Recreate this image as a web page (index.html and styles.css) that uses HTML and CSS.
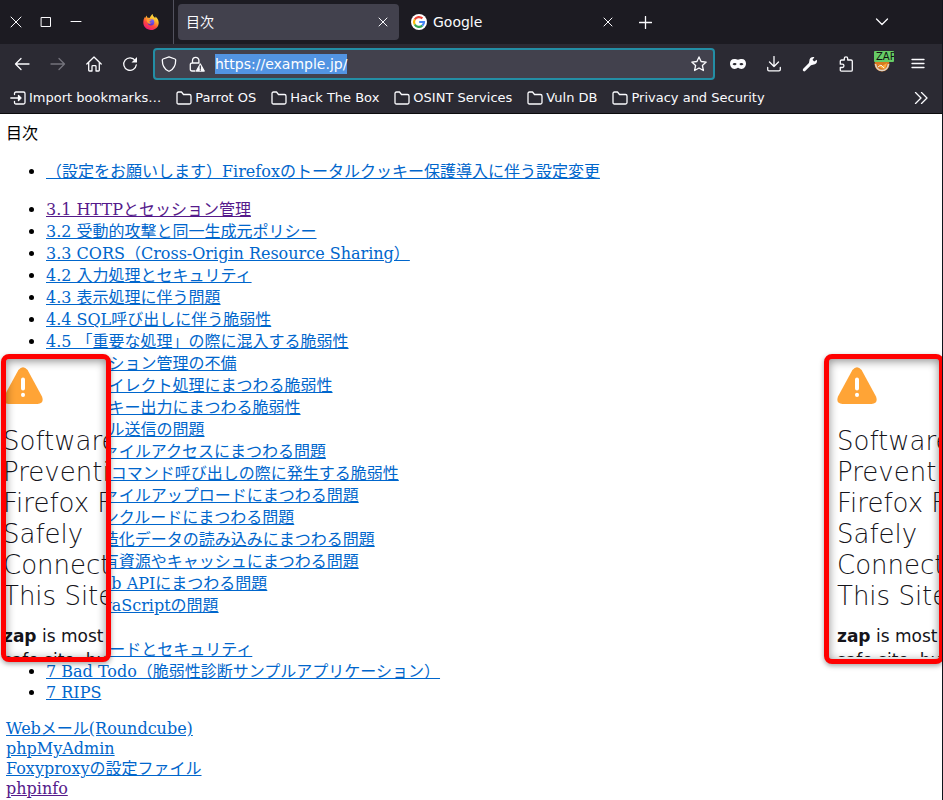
FILE: index.html
```html
<!DOCTYPE html>
<html lang="ja">
<head>
<meta charset="utf-8">
<meta name="viewport" content="width=device-width, initial-scale=1">
<title>目次</title>
<link rel="stylesheet" href="styles.css">
</head>
<body>
<div class="window">
  <header class="chrome">
    <div class="tabstrip">
      <div class="window-controls">
        <button class="control" type="button" aria-label="Close window"><svg class="icon thin" width="12" height="12" viewBox="0 0 12 12"><path d="M1 1l10 10M11 1L1 11"/></svg></button>
        <button class="control" type="button" aria-label="Maximize"><svg class="icon thin" width="12" height="12" viewBox="0 0 12 12"><path d="M1.500 1.500h9v9h-9z"/></svg></button>
        <button class="control" type="button" aria-label="Minimize"><svg class="icon thin" width="12" height="12" viewBox="0 0 12 12"><path d="M1 5.500h10"/></svg></button>
      </div>
      <button class="firefox-view" type="button" aria-label="Firefox View">
        <svg width="16" height="16" viewBox="0 0 16 16">
          <defs>
            <linearGradient id="flame" x1="0.8" y1="0" x2="0.25" y2="1"><stop offset="0" stop-color="#fff44f"/><stop offset="0.35" stop-color="#ffb52a"/><stop offset="0.65" stop-color="#ff4a3a"/><stop offset="1" stop-color="#e8137e"/></linearGradient>
            <linearGradient id="globe" x1="0.7" y1="0" x2="0.3" y2="1"><stop offset="0" stop-color="#7a6cff"/><stop offset="1" stop-color="#5b2ac4"/></linearGradient>
          </defs>
          <path fill="url(#flame)" d="M9.800.100c-.2 1.300.3 2.100 1.300 2.900l1.300 1.200c0-.7-.1-1.200-.3-1.600 2 1.200 3.600 3.500 3.600 6.100 0 4.200-3.400 7.300-7.700 7.300S.3 12.800.3 8.600c0-2.400.5-4.200 1.600-5.700l.3 1.200c.3-1 .8-1.800 1.600-2.500 0 .9.200 1.600.8 2.200.7-.1 1.400 0 2 .300C7.300 3 8.200.900 9.800.100z"/>
          <circle cx="8" cy="8.200" r="3.300" fill="url(#globe)"/>
          <path fill="#ff9d2e" d="M3.600 5.300c1.200-.6 2.400-.5 3.400.2h1.800c-.1.700-.7 1-1.500 1.200-.6.200-.9.500-.8 1 .2.900 1.200 1.300 2.400.9-1 1.500-3.300 1.500-4.500-.2-.5-.9-.8-2-.8-3.100z"/>
        </svg>
      </button>
      <div class="tabs">
        <div class="tab tab-active">
          <a class="tab-title" href="#">目次</a>
          <button class="tab-close" type="button" aria-label="Close tab"><svg class="icon thin" width="10" height="10" viewBox="0 0 10 10"><path d="M1 1l8 8M9 1L1 9"/></svg></button>
        </div>
        <div class="tab">
          <svg width="16" height="16" viewBox="0 0 16 16">
            <circle cx="8" cy="8" r="8" fill="#fff"/>
            <g fill="none" stroke-width="2.200">
              <path stroke="#ea4335" d="M3.700 5.500A5 5 0 0 1 11.400 4.400"/>
              <path stroke="#fbbc05" d="M3.700 10.500A5 5 0 0 1 3.700 5.500"/>
              <path stroke="#34a853" d="M3.700 10.500A5 5 0 0 0 11.300 11.700"/>
              <path stroke="#4285f4" d="M8.200 8H13A5 5 0 0 1 11.300 11.700"/>
            </g>
          </svg>
          <a class="tab-title" href="#">Google</a>
          <button class="tab-close" type="button" aria-label="Close tab"><svg class="icon thin" width="10" height="10" viewBox="0 0 10 10"><path d="M1 1l8 8M9 1L1 9"/></svg></button>
        </div>
        <button class="new-tab" type="button" aria-label="New tab"><svg class="icon" width="13" height="13" viewBox="0 0 13 13"><path d="M6.500 .5v12M.5 6.500h12"/></svg></button>
      </div>
      <button class="all-tabs" type="button" aria-label="List all tabs"><svg class="icon" width="14" height="8" viewBox="0 0 14 8"><path d="M1.500 1l5.500 5.500L12.500 1"/></svg></button>
    </div>

    <nav class="navbar">
      <button class="tool" type="button" aria-label="Back"><svg class="icon" width="16" height="16" viewBox="0 0 16 16"><path d="M15 8H1.500M7 2.500L1.500 8 7 13.500"/></svg></button>
      <button class="tool" type="button" aria-label="Forward" disabled><svg class="icon" width="16" height="16" viewBox="0 0 16 16"><path d="M1 8h13.500M9 2.500L14.500 8 9 13.500"/></svg></button>
      <button class="tool" type="button" aria-label="Home"><svg class="icon" width="16" height="16" viewBox="0 0 16 16"><path d="M.8 8L8 1l7.200 7M2.700 6.500v7.700q0 .8.800.8H6v-4.500q0-.8.800-.8h2.400q.8 0 .8.800V15h2.500q.8 0 .8-.8V6.500"/></svg></button>
      <button class="tool" type="button" aria-label="Reload"><svg class="icon" width="16" height="16" viewBox="0 0 16 16"><path d="M13.200 4.500A6.300 6.300 0 1 0 14.300 8.800"/><path class="fill" stroke="none" d="M15 1v5.500H9.500z"/></svg></button>
      <div class="urlbar">
        <button class="url-icon" type="button" aria-label="Tracking protection"><svg class="icon" width="16" height="16" viewBox="0 0 16 16"><path d="M8 .8l6 2.200q.7.300.7 1c0 5-2.200 9.200-6 11q-.7.300-1.400 0c-3.800-1.800-6-6-6-11q0-.7.700-1z"/></svg></button>
        <button class="url-icon" type="button" aria-label="Site information"><svg class="icon" width="16" height="16" viewBox="0 0 16 16"><path d="M3.500 7V4.500a3.200 3.200 0 0 1 6.400 0V7M6 15H3q-1.700 0-1.700-1.700V8.700Q1.300 7 3 7h7"/><path class="solid" d="M11.300 8l3.900 7H7.400z"/><path class="mark" d="M11.300 10v2.500M11.300 14v.2"/></svg></button>
        <input class="url-input" id="url" type="text" value="https://example.jp/" aria-label="Address" spellcheck="false">
        <button class="url-icon" type="button" aria-label="Bookmark this page"><svg class="icon" width="16" height="16" viewBox="0 0 16 16"><path d="M8 .9l2.100 4.600 5.100.6-3.800 3.400 1 5L8 12l-4.400 2.500 1-5L.8 6.100l5.100-.6z"/></svg></button>
      </div>
      <button class="tool" type="button" aria-label="Private mask"><svg width="16" height="12" viewBox="0 0 16 12"><path class="fill-evenodd" d="M4.200 1C5.800 1 7 1.700 8 1.700S10.200 1 11.800 1C14.400 1 16 2.800 16 5.500S14 11 11.600 11C9.700 11 9 9.700 8 9.700S6.300 11 4.400 11C2 11 0 8.200 0 5.500S1.600 1 4.200 1zM2.600 6.200c.8 1.500 3.400 1.400 4-.3-.7-1.500-3.400-1.300-4 .3zm10.800 0c-.6-1.600-3.300-1.800-4-.3.6 1.700 3.200 1.800 4 .3z"/></svg></button>
      <button class="tool" type="button" aria-label="Downloads"><svg class="icon" width="16" height="16" viewBox="0 0 16 16"><path d="M8 .5v10M3.500 6L8 10.500 12.500 6M1.700 11.500v2q0 1.300 1.300 1.300h10q1.300 0 1.300-1.300v-2"/></svg></button>
      <button class="tool" type="button" aria-label="Developer tools"><svg width="16" height="16" viewBox="0 0 16 16"><path class="fill" d="M14.800 3.700l-2.600 1.800-1.700-1.700L12.400 1.200C9.800.500 7.200 2.200 7.300 5.200L6.900 7.100 1 13q-.6 1.300.3 2t1.900.1L9 9.200l2-.5c2.800-.2 4.700-2.400 3.800-5z"/></svg></button>
      <button class="tool" type="button" aria-label="Extensions"><svg class="icon" width="16" height="16" viewBox="0 0 16 16"><path d="M6.300 4V2.600a1.700 1.700 0 0 1 3.400 0V4h3.300q1.300 0 1.300 1.300V14q0 1.200-1.300 1.200H3.500Q2.300 15.200 2.300 14v-2.500h2a1.600 1.600 0 0 0 0-3.300h-2V5.300Q2.300 4 3.500 4z"/></svg></button>
      <button class="tool" type="button" aria-label="Proxy container">
        <svg width="16" height="16" viewBox="0 0 16 16"><circle cx="8" cy="8" r="7.500" fill="#d87920"/><path d="M1.500 8q1 6.500 6.500 6.500t6.500-6.500" fill="none" stroke="#ddd3c9" stroke-width="1.600"/><path d="M4 8l4 2 5-3-2 6-4-1z" fill="#ffac3d"/><path d="M4 11l3-2 3 3" fill="none" stroke="#f5f0e8"/></svg>
        <span class="badge">ZAP</span>
      </button>
      <button class="tool" type="button" aria-label="Menu"><svg class="icon" width="14" height="12" viewBox="0 0 14 12"><path d="M1 1.500h12M1 5.500h12M1 9.500h12"/></svg></button>
    </nav>

    <div class="bookmarks">
      <a class="bookmark" href="#"><svg class="icon" width="16" height="16" viewBox="0 0 16 16"><path d="M4.500 4.500v-1Q4.500 2 6 2h7.500Q15 2 15 3.500v9q0 1.500-1.500 1.500H6q-1.500 0-1.500-1.500v-1M.8 8H10"/><path class="solid" d="M8.500 5.500L11 8l-2.500 2.500z"/></svg>Import bookmarks…</a>
      <a class="bookmark" href="#"><svg class="icon" width="16" height="16" viewBox="0 0 16 16"><path d="M1 12.500v-9Q1 2 2.500 2h3l2 2.500h6Q15 4.500 15 6v6.500q0 1.500-1.500 1.500h-11Q1 14 1 12.500z"/></svg>Parrot OS</a>
      <a class="bookmark" href="#"><svg class="icon" width="16" height="16" viewBox="0 0 16 16"><path d="M1 12.500v-9Q1 2 2.500 2h3l2 2.500h6Q15 4.500 15 6v6.500q0 1.500-1.500 1.500h-11Q1 14 1 12.500z"/></svg>Hack The Box</a>
      <a class="bookmark" href="#"><svg class="icon" width="16" height="16" viewBox="0 0 16 16"><path d="M1 12.500v-9Q1 2 2.500 2h3l2 2.500h6Q15 4.500 15 6v6.500q0 1.500-1.500 1.500h-11Q1 14 1 12.500z"/></svg>OSINT Services</a>
      <a class="bookmark" href="#"><svg class="icon" width="16" height="16" viewBox="0 0 16 16"><path d="M1 12.500v-9Q1 2 2.500 2h3l2 2.500h6Q15 4.500 15 6v6.500q0 1.500-1.500 1.500h-11Q1 14 1 12.500z"/></svg>Vuln DB</a>
      <a class="bookmark" href="#"><svg class="icon" width="16" height="16" viewBox="0 0 16 16"><path d="M1 12.500v-9Q1 2 2.500 2h3l2 2.500h6Q15 4.500 15 6v6.500q0 1.500-1.500 1.500h-11Q1 14 1 12.500z"/></svg>Privacy and Security</a>
      <button class="more" type="button" aria-label="More bookmarks"><svg class="icon" width="14" height="12" viewBox="0 0 14 12"><path d="M1.500.5L7 6l-5.500 5.500M7.500.5L13 6l-5.500 5.500"/></svg></button>
    </div>
  </header>

  <main class="page">
    <div>目次</div>
    <ul>
      <li><a href="#">（設定をお願いします）Firefoxのトータルクッキー保護導入に伴う設定変更</a></li>
    </ul>
    <ul>
      <li><a class="visited" href="#">3.1 HTTPとセッション管理</a></li>
      <li><a href="#">3.2 受動的攻撃と同一生成元ポリシー</a></li>
      <li><a href="#">3.3 CORS（Cross-Origin Resource Sharing）</a></li>
      <li><a href="#">4.2 入力処理とセキュリティ</a></li>
      <li><a href="#">4.3 表示処理に伴う問題</a></li>
      <li><a href="#">4.4 SQL呼び出しに伴う脆弱性</a></li>
      <li><a href="#">4.5 「重要な処理」の際に混入する脆弱性</a></li>
      <li><a href="#">4.6 セッション管理の不備</a></li>
      <li><a href="#">4.7 リダイレクト処理にまつわる脆弱性</a></li>
      <li><a href="#">4.8 クッキー出力にまつわる脆弱性</a></li>
      <li><a href="#">4.9 メール送信の問題</a></li>
      <li><a href="#">4.10 ファイルアクセスにまつわる問題</a></li>
      <li><a href="#">4.11 OSコマンド呼び出しの際に発生する脆弱性</a></li>
      <li><a href="#">4.12 ファイルアップロードにまつわる問題</a></li>
      <li><a href="#">4.13 インクルードにまつわる問題</a></li>
      <li><a href="#">4.14 構造化データの読み込みにまつわる問題</a></li>
      <li><a href="#">4.15 共有資源やキャッシュにまつわる問題</a></li>
      <li><a href="#">4.16 Web APIにまつわる問題</a></li>
      <li><a href="#">4.17 JavaScriptの問題</a></li>
      <li></li>
      <li><a href="#">6 文字コードとセキュリティ</a></li>
      <li><a href="#">7 Bad Todo（脆弱性診断サンプルアプリケーション）</a></li>
      <li class="latin"><a href="#">7 RIPS</a></li>
    </ul>
    <div class="tools">
      <a href="#">Webメール(Roundcube)</a>
      <a href="#">phpMyAdmin</a>
      <a href="#">Foxyproxyの設定ファイル</a>
      <a class="visited" href="#">phpinfo</a>
    </div>
  </main>

  <aside class="callout callout-left">
    <div class="warning">
      <svg width="40" height="37" viewBox="0 0 40 37"><path fill="#ffa436" d="M15.400 3Q20-2.500 24.600 3L39 29.500Q41.500 36.500 34.500 37h-29Q-1.500 36.500 1 29.500z"/><path d="M20 12.500v9M20 27.800v.1" stroke="#fff" stroke-width="4" stroke-linecap="round"/></svg>
      <h1><span>Software</span><span>Preventing</span><span>Firefox F</span><span>Safely</span><span>Connecting</span><span>This Site</span></h1>
      <p><b>zap</b> is most<br>safe site, bu</p>
    </div>
  </aside>
  <aside class="callout callout-right">
    <div class="warning">
      <svg width="40" height="37" viewBox="0 0 40 37"><path fill="#ffa436" d="M15.400 3Q20-2.500 24.600 3L39 29.500Q41.500 36.500 34.500 37h-29Q-1.500 36.500 1 29.500z"/><path d="M20 12.500v9M20 27.800v.1" stroke="#fff" stroke-width="4" stroke-linecap="round"/></svg>
      <h1><span>Software</span><span>Preventing</span><span>Firefox F</span><span>Safely</span><span>Connecting</span><span>This Site</span></h1>
      <p><b>zap</b> is most<br>safe site, bu</p>
    </div>
  </aside>
</div>
<script src="script.js"></script>
</body>
</html>
```
FILE: script.js
```js
// Start with the address selected, ready to be typed over.
const url = document.getElementById("url");
url.focus();
url.select();
```
FILE: styles.css
```css
* {
  box-sizing: border-box;
}

body {
  margin: 0;
  background: #fff;
}

button {
  display: flex;
  align-items: center;
  justify-content: center;
  flex: none;
  margin: 0;
  padding: 0;
  border: 0;
  background: none;
  color: inherit;
  font: inherit;
}

svg {
  display: block;
  flex: none;
}

.icon {
  fill: none;
  stroke: currentColor;
  stroke-width: 1.3;
  stroke-linecap: round;
  stroke-linejoin: round;
}

.thin {
  stroke-width: 1;
}

.solid,
.fill {
  fill: currentColor;
}

.fill-evenodd {
  fill: currentColor;
  fill-rule: evenodd;
}

.mark {
  stroke: #42414d;
}

.window {
  position: relative;
  min-height: 100vh;
  overflow: hidden;
  border-right: 1px solid #10141c;
}

.chrome {
  background: #2b2a33;
  border-bottom: 1px solid #0c0c0d;
  color: #fbfbfe;
  font: 14px/20px "DejaVu Sans", "Noto Sans CJK JP", sans-serif;
}

.tabstrip {
  display: flex;
  align-items: stretch;
  height: 44px;
  background: #1c1b22;
}

.window-controls {
  display: flex;
  gap: 18px;
  padding-left: 10px;
}

.control {
  width: 12px;
}

.firefox-view {
  width: 45px;
  margin-left: 47px;
  border-right: 1px solid #52525e;
}

.tabs {
  display: flex;
  flex: 1;
  align-items: center;
  gap: 4px;
  min-width: 0;
  padding-left: 4px;
}

.tab {
  display: flex;
  flex: 0 1 221px;
  align-items: center;
  gap: 6px;
  height: 36px;
  min-width: 0;
  padding: 0 11px 0 8px;
  border-radius: 4px;
}

.tab-active {
  background: #42414d;
}

.tab-title {
  flex: 1;
  overflow: hidden;
  color: inherit;
  text-decoration: none;
  white-space: nowrap;
}

.new-tab {
  width: 34px;
}

.all-tabs {
  width: 36px;
  margin-right: 42px;
}

.navbar {
  display: flex;
  align-items: center;
  height: 40px;
  padding: 0 6px 0 4px;
}

.tool {
  position: relative;
  width: 36px;
  height: 32px;
}

.tool:disabled {
  color: #74737c;
}

.urlbar {
  display: flex;
  flex: 1;
  align-items: center;
  min-width: 0;
  height: 32px;
  margin: 0 5px;
  border: 2px solid #238ea5;
  border-radius: 4px;
  background: #42414d;
}

.url-icon {
  width: 28px;
  height: 28px;
}

.url-input {
  flex: 1;
  min-width: 0;
  margin-left: 4px;
  padding: 0;
  border: 0;
  outline: 0;
  background: none;
  color: #fbfbfe;
  font: inherit;
}

.url-input::selection {
  background: #5294e2;
  color: #fff;
}

.badge {
  position: absolute;
  top: 3px;
  left: 10px;
  width: 20px;
  height: 11px;
  padding-left: 2px;
  overflow: hidden;
  border-radius: 1px;
  background: #66cc66;
  color: #111;
  font-size: 10px;
  line-height: 11px;
  text-align: left;
}

.bookmarks {
  display: flex;
  align-items: center;
  gap: 15px;
  height: 29px;
  padding: 0 14px 1px 10px;
  font-size: 13px;
}

.bookmark {
  display: flex;
  align-items: center;
  gap: 3px;
  color: inherit;
  text-decoration: none;
  white-space: nowrap;
}

.more {
  margin-left: auto;
}

.page {
  padding: 9px 6px 0;
  color: #000;
  font: 16px/22px "DejaVu Serif", "Noto Sans CJK JP", serif;
}

.page ul {
  margin: 16px 0;
  padding-left: 40px;
}

.page li {
  min-height: 22px;
}

.page li.latin {
  min-height: 20px;
}

.page a {
  color: #0066cc;
}

.page a.visited {
  color: #551a8b;
}

.latin,
.tools {
  line-height: 20px;
}

.tools {
  display: flex;
  flex-direction: column;
  align-items: flex-start;
}

.callout {
  position: absolute;
  top: 354px;
  overflow: hidden;
  border: 5px solid #f00;
  border-radius: 8px;
  background: #fff;
  box-shadow: 0 2px 5px rgba(0, 0, 0, 0.35);
}

.callout::after {
  content: "";
  position: absolute;
  inset: 0;
  box-shadow: inset 0 2px 10px rgba(0, 0, 0, 0.45);
}

.callout-left {
  left: 1px;
  width: 110px;
  height: 308px;
}

.callout-right {
  right: -2px;
  width: 120px;
  height: 310px;
}

.warning {
  height: 298px;
  padding-top: 8px;
  overflow: hidden;
  color: #15141a;
  font: 17px/24px "DejaVu Sans", sans-serif;
  white-space: nowrap;
}

.callout-left .warning {
  margin-left: -3px;
}

.callout-right .warning {
  margin-left: 8px;
}

.warning h1 {
  margin: 22px 0 12px;
  font-size: 26px;
  font-weight: 200;
  line-height: 31px;
}

.warning h1 span {
  display: block;
}

.warning p {
  margin: 0;
}
```
